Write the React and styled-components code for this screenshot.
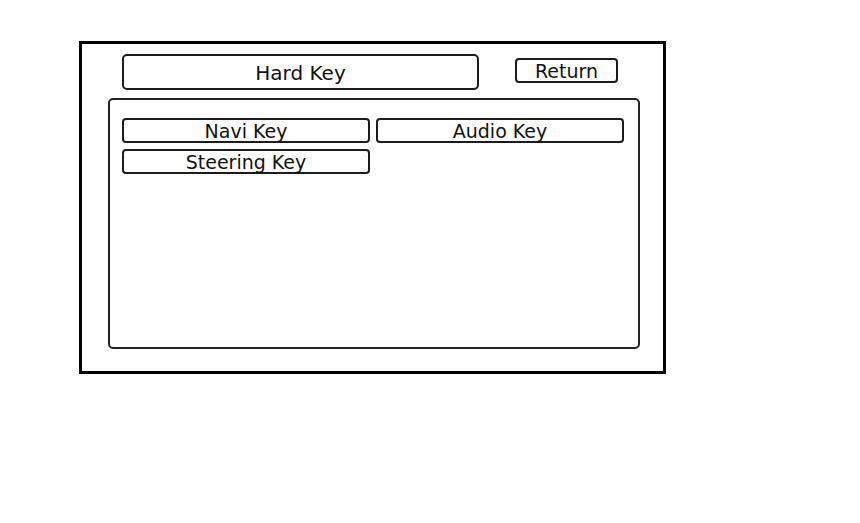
import React from "react";
import styled, { createGlobalStyle } from "styled-components";

const Global = createGlobalStyle`
  html, body { margin: 0; padding: 0; background: #fff; }
  *, *::before, *::after { box-sizing: border-box; }
  body { font-family: "DejaVu Sans", "Liberation Sans", sans-serif; color: #111; }
`;

const Screen = styled.div`
  margin: 41px 0 0 79px;
  width: 587px;
  height: 333px;
  border: 3px solid #000;
  display: flex;
  flex-direction: column;
  padding: 10px 23px 22px 26px;
`;

const Header = styled.div`
  display: flex;
  align-items: flex-start;
  padding-left: 14px;
`;

const TitleBox = styled.div`
  width: 357px;
  height: 36px;
  border: 2px solid #1c1c1c;
  border-radius: 5px;
  display: flex;
  align-items: center;
  justify-content: center;
  font-size: 20px;
  padding-top: 1px;
`;

const KeyButton = styled.div`
  height: 25px;
  width: ${(p) => p.$w || "auto"};
  border: 2px solid #1c1c1c;
  border-radius: 4px;
  display: flex;
  align-items: center;
  justify-content: center;
  font-size: 19px;
  line-height: 1;
  padding-top: 1px;
  margin: ${(p) => p.$m || "0"};
`;

const Panel = styled.div`
  flex: 1;
  margin-top: 8px;
  border: 2px solid #222;
  border-radius: 5px;
  padding: 18px 15px 0 12px;
  display: grid;
  grid-template-columns: 248px 248px;
  grid-auto-rows: 25px;
  column-gap: 6px;
  row-gap: 6px;
  align-content: start;
`;

export default function App() {
  return (
    <>
      <Global />
      <Screen>
        <Header>
          <TitleBox>Hard Key</TitleBox>
          <KeyButton $w="103px" $m="4px 0 0 36px">Return</KeyButton>
        </Header>
        <Panel>
          <KeyButton>Navi Key</KeyButton>
          <KeyButton>Audio Key</KeyButton>
          <KeyButton>Steering Key</KeyButton>
        </Panel>
      </Screen>
    </>
  );
}
